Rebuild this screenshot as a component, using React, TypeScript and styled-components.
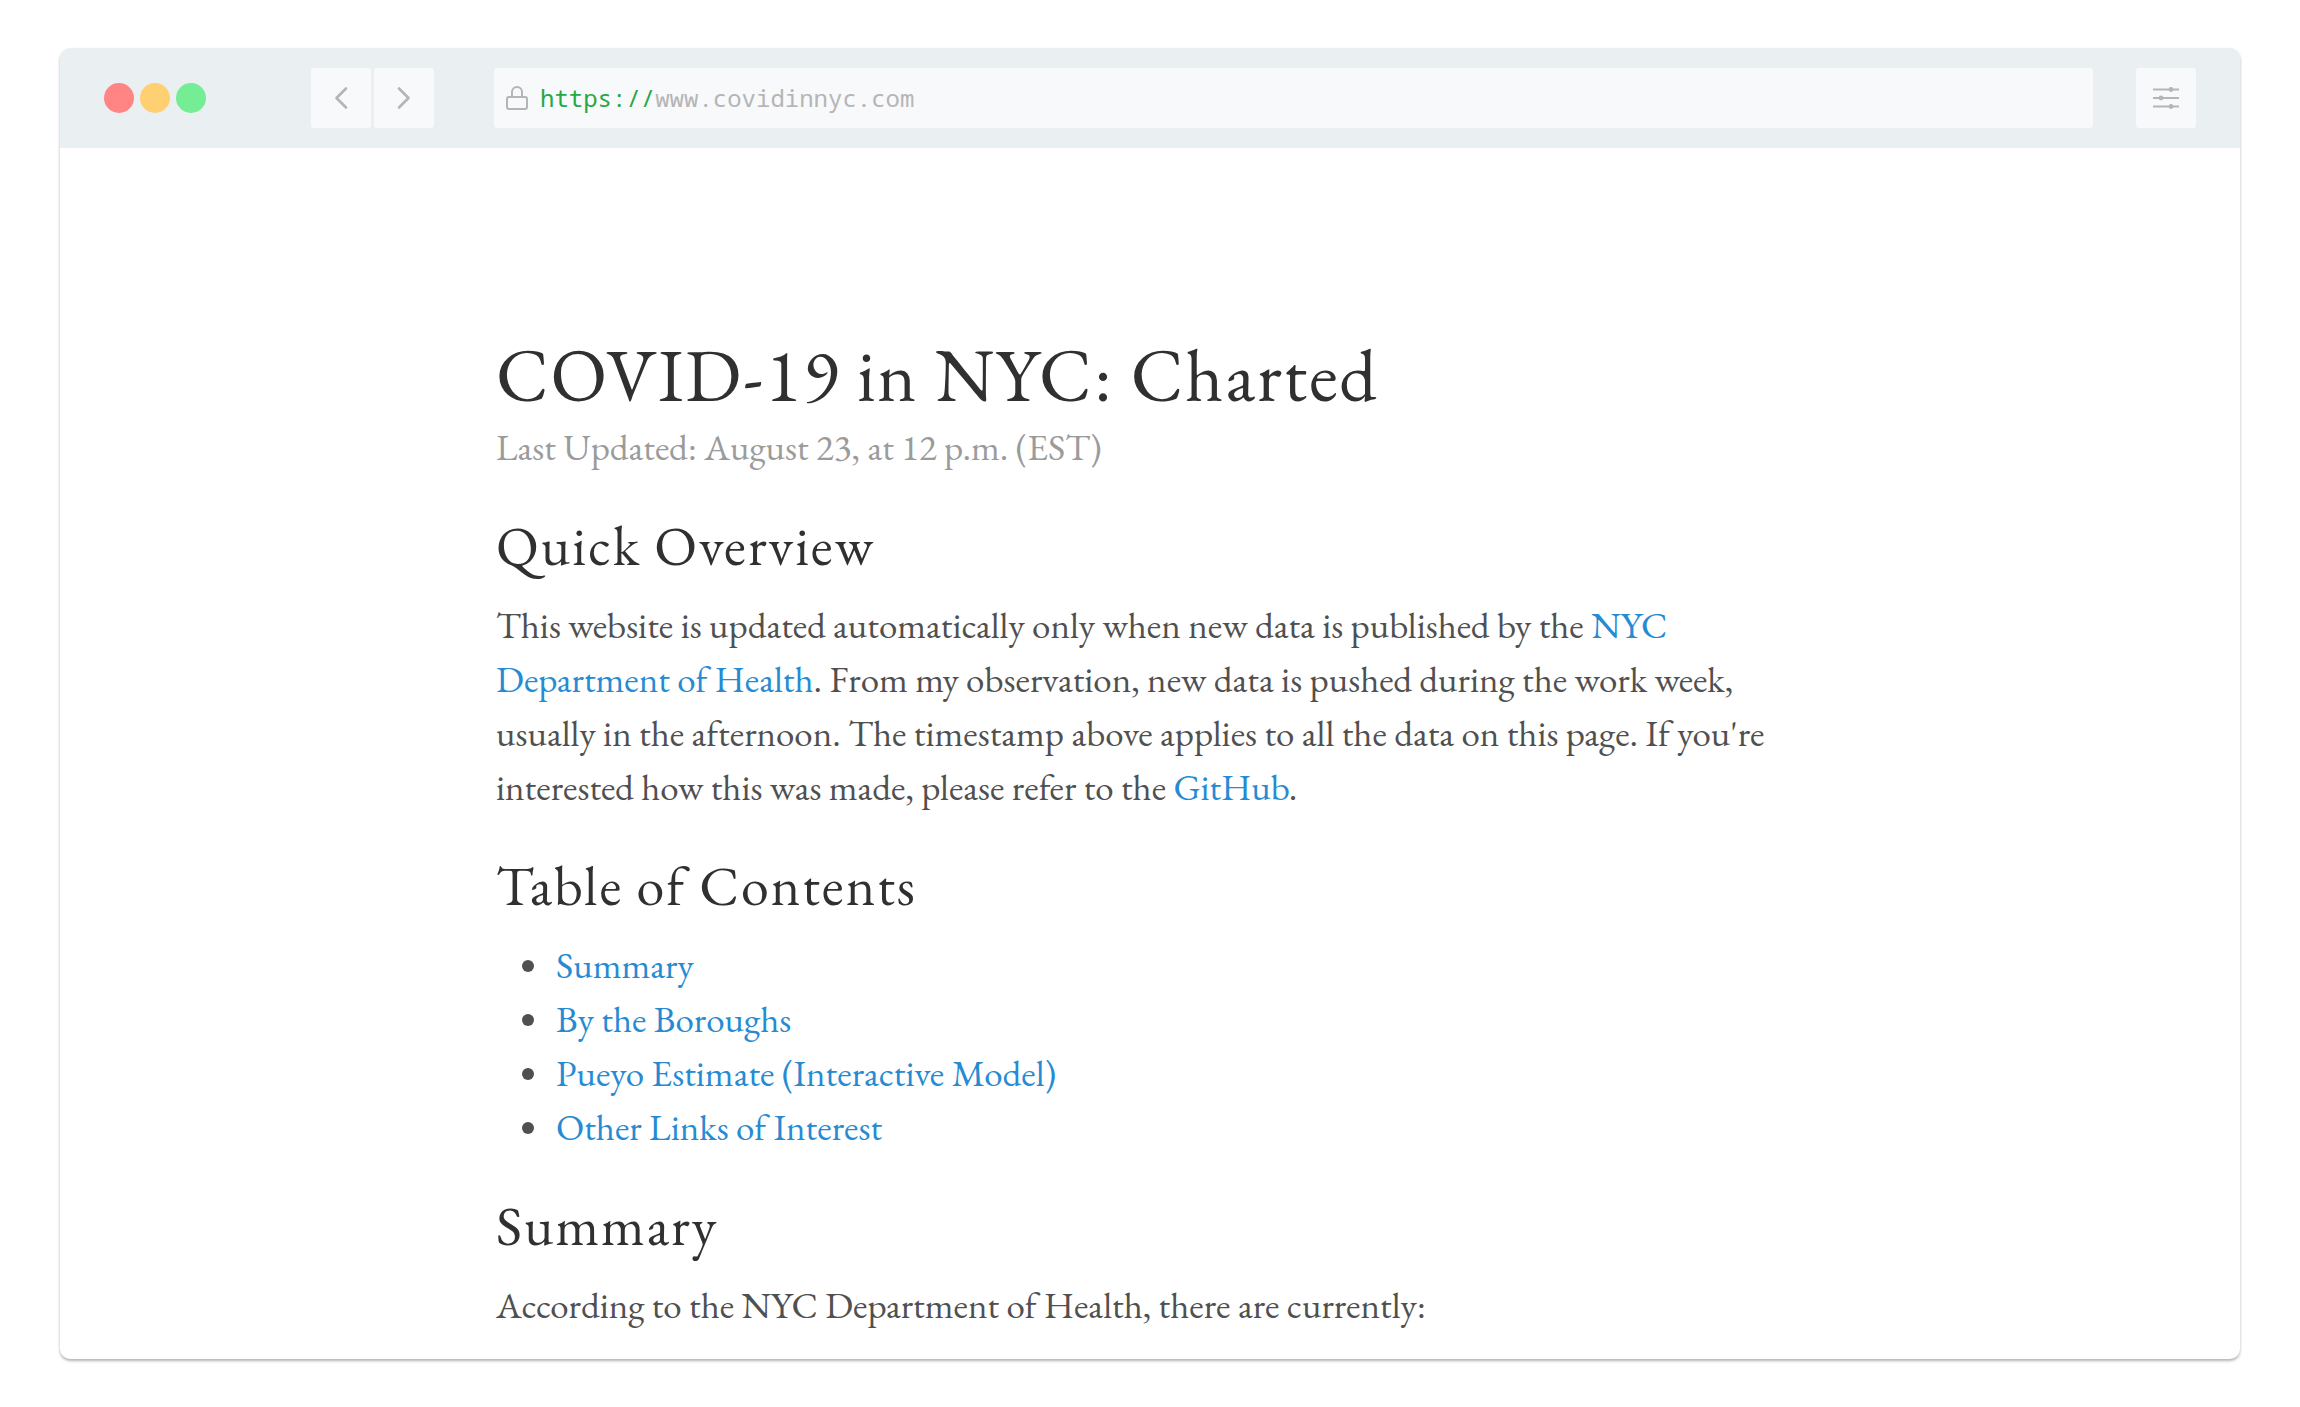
import React from "react";
import styled, { createGlobalStyle } from "styled-components";

const GlobalStyle = createGlobalStyle`
  * { box-sizing: border-box; }
  body {
    margin: 0;
    background: #ffffff;
    color: #505050;
    font-family: "EB Garamond", "Liberation Serif", serif;
    font-size: 37px;
    line-height: 54px;
  }
`;

const Desktop = styled.div`
  display: flex;
  min-height: 100vh;
  padding: 48px 60px;
`;

const BrowserWindow = styled.div`
  flex: 1;
  display: flex;
  flex-direction: column;
  min-width: 0;
  border-radius: 10px;
  background: #ffffff;
  box-shadow: 0 2px 3px rgba(0, 0, 0, 0.3);
  overflow: hidden;
`;

const Toolbar = styled.header`
  display: flex;
  align-items: center;
  height: 100px;
  padding: 0 44px;
  background: #eaeff2;
`;

const Lights = styled.div`
  display: flex;
  gap: 6px;
  margin-right: 105px;
`;

const Light = styled.span<{ $color: string }>`
  width: 30px;
  height: 30px;
  border-radius: 50%;
  background: ${(p) => p.$color};
`;

const NavButtons = styled.div`
  display: flex;
  gap: 3px;
  margin-right: 60px;
`;

const ToolButton = styled.button`
  display: flex;
  align-items: center;
  justify-content: center;
  width: 60px;
  height: 60px;
  padding: 0;
  border: 0;
  border-radius: 3px;
  background: #f8f9fb;
  color: #b5b5b5;
`;

const AddressBar = styled.label`
  flex: 1;
  display: flex;
  align-items: center;
  min-width: 0;
  height: 60px;
  margin-right: 43px;
  padding: 0 12px;
  border-radius: 3px;
  background: #f8f9fb;
  color: #b5b5b5;
  font: 24px/30px "Noto Sans Mono", "DejaVu Sans Mono", monospace;
`;

const Scheme = styled.span`
  margin-left: 12px;
  color: #28a745;
`;

const AddressInput = styled.input`
  flex: 1;
  min-width: 0;
  padding: 0;
  border: 0;
  outline: 0;
  background: transparent;
  color: inherit;
  font: inherit;
`;

const Article = styled.main`
  width: 60%;
  min-width: 1308px;
  margin: 0 auto;
  padding: 182px 0 20px;
`;

const Title = styled.h1`
  margin: 0;
  color: #303030;
  font-size: 74px;
  font-weight: 400;
  line-height: 90px;
  letter-spacing: 2px;
`;

const Updated = styled.p`
  margin: 0;
  color: #9b9b9b;
`;

const Heading = styled.h2`
  margin: 40px 0 20px;
  color: #303030;
  font-size: 56px;
  font-weight: 400;
  line-height: 64px;
  letter-spacing: 2px;
`;

const Paragraph = styled.p`
  margin: 0;
`;

const Contents = styled.ul`
  margin: 0;
  padding-left: 57px;
`;

const ContentsItem = styled.li`
  padding-left: 3px;
`;

const Link = styled.a`
  color: #268bd2;
  text-decoration: none;
`;

const Chevron = ({ points }: { points: string }) => (
  <svg width="24" height="24" viewBox="0 0 24 24" fill="none" stroke="currentColor" strokeWidth="2.6" strokeLinecap="round" strokeLinejoin="round" aria-hidden="true">
    <polyline points={points} />
  </svg>
);

const LockIcon = () => (
  <svg width="22" height="24" viewBox="0 0 22 24" fill="none" stroke="currentColor" strokeWidth="2" aria-hidden="true">
    <rect x="1" y="11" width="20" height="12" rx="2" />
    <path d="M6 11V6a5 5 0 0 1 10 0v5" />
  </svg>
);

const SlidersIcon = () => (
  <svg width="26" height="24" viewBox="0 0 26 24" fill="currentColor" aria-hidden="true">
    <rect x="0" y="2.5" width="26" height="2" />
    <rect x="0" y="11" width="26" height="2" />
    <rect x="0" y="19.5" width="26" height="2" />
    <circle cx="18" cy="3.5" r="2.4" />
    <circle cx="8" cy="12" r="2.4" />
    <circle cx="18" cy="20.5" r="2.4" />
  </svg>
);

const sections = [
  { id: "summary", label: "Summary" },
  { id: "boroughs", label: "By the Boroughs" },
  { id: "pueyo", label: "Pueyo Estimate (Interactive Model)" },
  { id: "links", label: "Other Links of Interest" },
];

export default function App() {
  return (
    <>
      <GlobalStyle />
      <Desktop>
        <BrowserWindow>
          <Toolbar>
            <Lights>
              <Light $color="#ff8585" />
              <Light $color="#ffd071" />
              <Light $color="#74ed94" />
            </Lights>
            <NavButtons>
              <ToolButton type="button" aria-label="Back">
                <Chevron points="17,2.5 7.5,12 17,21.5" />
              </ToolButton>
              <ToolButton type="button" aria-label="Forward">
                <Chevron points="7,2.5 16.5,12 7,21.5" />
              </ToolButton>
            </NavButtons>
            <AddressBar>
              <LockIcon />
              <Scheme>https://</Scheme>
              <AddressInput type="text" aria-label="Address" defaultValue="www.covidinnyc.com" />
            </AddressBar>
            <ToolButton type="button" aria-label="Settings">
              <SlidersIcon />
            </ToolButton>
          </Toolbar>
          <Article>
            <Title>COVID-19 in NYC: Charted</Title>
            <Updated>Last Updated: August 23, at 12 p.m. (EST)</Updated>
            <Heading>Quick Overview</Heading>
            <Paragraph>
              This website is updated automatically only when new data is published by the{" "}
              <Link href="#health">NYC Department of Health</Link>. From my observation, new data is
              pushed during the work week, usually in the afternoon. The timestamp above applies to
              all the data on this page. If you're interested how this was made, please refer to
              the <Link href="#github">GitHub</Link>.
            </Paragraph>
            <Heading>Table of Contents</Heading>
            <Contents>
              {sections.map((s) => (
                <ContentsItem key={s.id}>
                  <Link href={`#${s.id}`}>{s.label}</Link>
                </ContentsItem>
              ))}
            </Contents>
            <Heading id="summary">Summary</Heading>
            <Paragraph>According to the NYC Department of Health, there are currently:</Paragraph>
          </Article>
        </BrowserWindow>
      </Desktop>
    </>
  );
}
